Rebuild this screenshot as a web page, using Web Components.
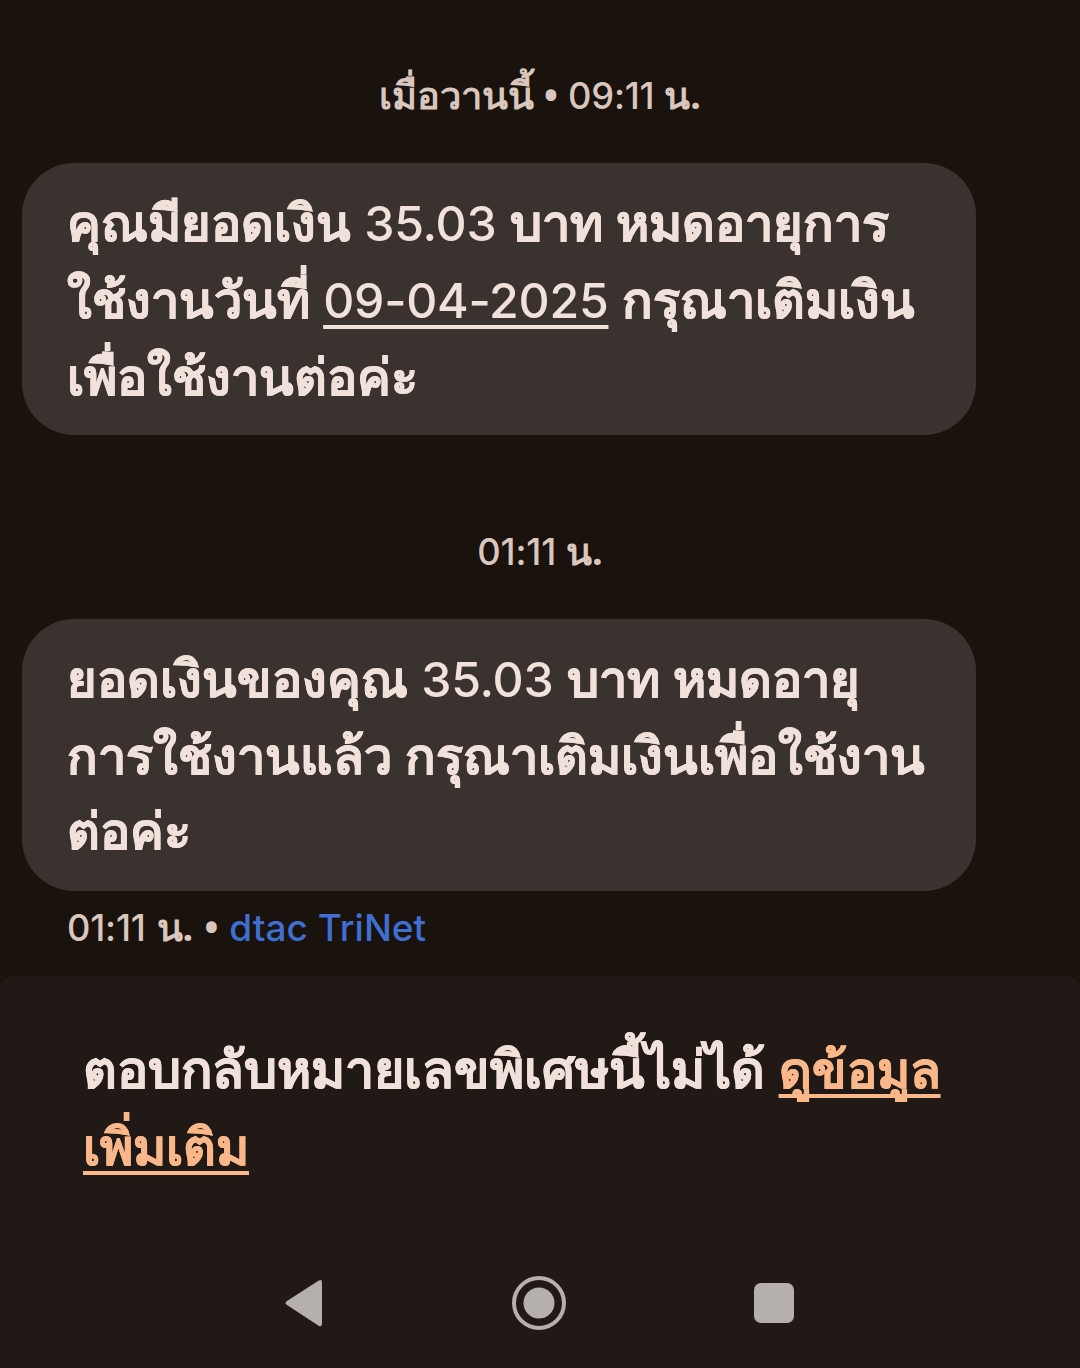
<!doctype html><html lang="th"><head><meta charset="utf-8"><title>Messages</title>
<style>html,body{margin:0;background:#1a120c}</style></head><body>
<sms-screen>
<sms-stamp top="57">เมื่อวานนี้ • <sms-num>09:11</sms-num> น.</sms-stamp>
<sms-bubble>คุณมียอดเงิน <sms-num>35.03</sms-num> บาท หมดอายุการ<br>ใช้งานวันที่ <sms-num link>09-04-2025</sms-num> กรุณาเติมเงิน<br>เพื่อใช้งานต่อค่ะ</sms-bubble>
<sms-stamp top="78"><sms-num>01:11</sms-num> น.</sms-stamp>
<sms-bubble>ยอดเงินของคุณ <sms-num>35.03</sms-num> บาท หมดอายุ<br>การใช้งานแล้ว กรุณาเติมเงินเพื่อใช้งาน<br>ต่อค่ะ</sms-bubble>
<sms-meta><sms-num>01:11</sms-num> น. • <sms-sim>dtac TriNet</sms-sim></sms-meta>
<sms-panel>
<sms-notice>ตอบกลับหมายเลขพิเศษนี้ไม่ได้ <sms-more>ดูข้อมูล</sms-more><br><sms-more>เพิ่มเติม</sms-more></sms-notice>
<sms-nav></sms-nav>
</sms-panel>
</sms-screen>
<script>
const THAI='"Noto Sans","Liberation Sans",sans-serif';
function def(name,css,html,init){customElements.define(name,class extends HTMLElement{constructor(){super();const r=this.attachShadow({mode:'open'});r.innerHTML='<style>'+css+'</style>'+(html||'<slot></slot>');if(init)this._i=init;}connectedCallback(){if(this._i)this._i(this);}});}
def('sms-screen',`:host{display:flex;flex-direction:column;width:1080px;height:1368px;background:#1a120c;overflow:hidden;font-family:${THAI};white-space:nowrap}`);
def('sms-num',`:host{display:inline;font-family:Inter,sans-serif;font-size:.955em;font-weight:500;letter-spacing:-.005em;-webkit-text-stroke:0}:host([link]){text-decoration:underline;text-decoration-thickness:3.5px;text-underline-offset:7px;text-decoration-skip-ink:none}`);
def('sms-stamp',`:host{display:block;height:76px;line-height:74px;text-align:center;font-size:38px;font-weight:700;color:#d9c6bc;margin-bottom:30px}`,null,e=>{e.style.marginTop=e.getAttribute('top')+'px'});
def('sms-bubble',`:host{display:block;box-sizing:border-box;margin-left:22px;width:954px;height:272px;padding:21px 45px;background:#39322f;border-radius:52px;color:#f0e2da;font-size:50.5px;line-height:75px;font-weight:700;-webkit-text-stroke:.5px #f0e2da}`);
def('sms-meta',`:host{display:block;margin:12px 0 23px 67px;height:50px;line-height:47px;font-size:38px;font-weight:700;color:#d9c6bc;word-spacing:1px}`);
def('sms-sim',`:host{display:inline;color:#3f6fd1;font-family:Inter,sans-serif;font-size:37px;font-weight:500;word-spacing:0}`);
def('sms-panel',`:host{display:flex;flex-direction:column;flex:1;background:#211915;border-radius:14px 14px 0 0}`);
def('sms-notice',`:host{display:block;padding:54px 0 0 83px;color:#f0e2da;font-size:52px;line-height:75.5px;font-weight:700;-webkit-text-stroke:.5px #f0e2da}`);
def('sms-more',`:host{display:inline;color:#fab88a;font-size:50.5px;-webkit-text-stroke:.5px #fab88a;text-decoration:underline;text-decoration-thickness:4px;text-underline-offset:6px;text-decoration-skip-ink:none}`);
def('sms-nav',`:host{display:flex;margin-top:auto;height:130px;align-items:center;justify-content:center;gap:0}svg{display:block}`,
`<svg width="1080" height="130" viewBox="0 0 1080 130" fill="#b5b0ad"><path d="M321 42Q322 42 322 45V85Q322 89 319 88L287 67Q284 65 287 63L318 43Q320 42 321 42Z"/><circle cx="539" cy="65" r="25" fill="none" stroke="#b5b0ad" stroke-width="4"/><circle cx="539" cy="65" r="15.5"/><rect x="754" y="45" width="40" height="40" rx="7"/></svg>`);
</script>
</body></html>
